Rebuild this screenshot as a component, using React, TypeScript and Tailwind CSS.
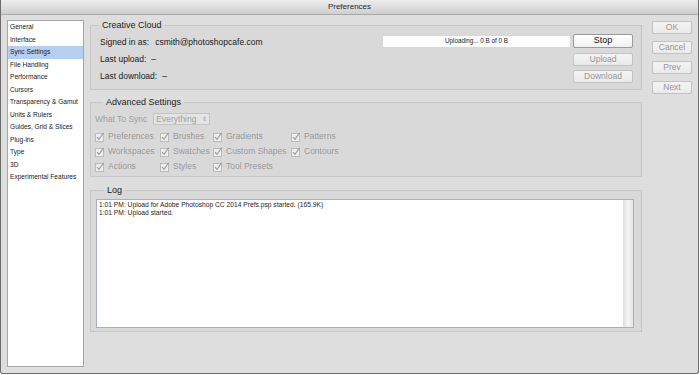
const sections = [
  "General",
  "Interface",
  "Sync Settings",
  "File Handling",
  "Performance",
  "Cursors",
  "Transparency & Gamut",
  "Units & Rulers",
  "Guides, Grid & Slices",
  "Plug-ins",
  "Type",
  "3D",
  "Experimental Features",
];

const syncRows = [
  ["Preferences", "Brushes", "Gradients", "Patterns"],
  ["Workspaces", "Swatches", "Custom Shapes", "Contours"],
  ["Actions", "Styles", "Tool Presets"],
];

const logLines = [
  "1:01 PM: Upload for Adobe Photoshop CC 2014 Prefs.psp started. (165.9K)",
  "1:01 PM: Upload started.",
];

function Check({ label }: { label: string }) {
  return (
    <div className="flex items-center gap-[3px] h-[15px]">
      <svg width="10" height="10" viewBox="0 0 10 10" className="shrink-0">
        <rect x="0.5" y="1.5" width="8" height="8" fill="#efefef" stroke="#bababa" />
        <path d="M2 5.2 L4 7.4 L8.6 0.8" fill="none" stroke="#9a9a9a" strokeWidth="1.1" />
      </svg>
      <span className="text-[8.5px] text-[#9a9a9a]">{label}</span>
    </div>
  );
}

function Btn({ label, active, className }: { label: string; active?: boolean; className?: string }) {
  return (
    <div
      className={
        "flex items-center justify-center rounded-[2px] border bg-gradient-to-b " +
        (active
          ? "border-[#9a9a9a] from-white to-[#f1f1f1] text-[#111] text-[9px] font-medium "
          : "border-[#c2c2c2] from-[#f4f4f4] to-[#eaeaea] text-[#979797] text-[8.5px] ") +
        (className ?? "")
      }
    >
      {label}
    </div>
  );
}

function Group({ title, className, children }: { title: string; className?: string; children: React.ReactNode }) {
  return (
    <fieldset className={"border border-[#c6c6c6] bg-[#d9d9d9] " + (className ?? "")}>
      <legend className="ml-[8px] px-[3px] text-[9px] leading-[11px] text-[#1c1c1c]">{title}</legend>
      {children}
    </fieldset>
  );
}

export default function App() {
  return (
    <div className="w-[700px] h-[375px] bg-white font-['Liberation_Sans',Arial,sans-serif]">
      <div className="w-[699px] h-[374px] flex flex-col border-x border-b border-[#6c6c6c] rounded-b-[3px] bg-[#dedede] overflow-hidden">
        <div className="h-[15px] shrink-0 flex items-center justify-center border-b border-[#a9a9a9] bg-gradient-to-b from-[#ececec] to-[#cfcfcf] text-[8px] text-[#2a2a2a]">
          Preferences
        </div>

        <div className="flex flex-1 pt-[5px] pl-[6px] pb-[6px]">
          <div className="w-[77px] border border-[#a6a6a6] bg-white">
            {sections.map((s) => (
              <div
                key={s}
                className={
                  "h-[12.5px] leading-[12.5px] pl-[2px] text-[6.6px] text-[#1a1a1a] whitespace-nowrap " +
                  (s === "Sync Settings" ? "bg-[#b6cff0]" : "")
                }
              >
                {s}
              </div>
            ))}
          </div>

          <div className="ml-[6px] w-[552px] flex flex-col">
            <Group title="Creative Cloud" className="pb-[4px]">
              <div className="flex">
                <div className="flex-1 pl-[9px] pt-[3px] text-[8.5px] text-[#1a1a1a]">
                  <div className="h-[17px] leading-[17px]">
                    Signed in as:<span className="ml-[6px]">csmith@photoshopcafe.com</span>
                  </div>
                  <div className="h-[17px] leading-[17px]">
                    Last upload:<span className="ml-[5px]">–</span>
                  </div>
                  <div className="h-[17px] leading-[17px]">
                    Last download:<span className="ml-[5px]">–</span>
                  </div>
                </div>
                <div className="pt-[3px] pr-[8px] flex flex-col items-end">
                  <div className="flex items-center gap-[3px]">
                    <div className="w-[187px] h-[11px] bg-white flex items-center justify-center text-[6.3px] text-[#222]">
                      Uploading... 0 B of 0 B
                    </div>
                    <Btn label="Stop" active className="w-[60px] h-[14px]" />
                  </div>
                  <Btn label="Upload" className="w-[60px] h-[13px] mt-[5px]" />
                  <Btn label="Download" className="w-[60px] h-[13px] mt-[4px]" />
                </div>
              </div>
            </Group>

            <Group title="Advanced Settings" className="mt-[7px] pl-[4px] pb-[2px]">
              <div className="mt-[5px] flex items-center h-[12px]">
                <span className="text-[8.5px] text-[#a0a0a0]">What To Sync</span>
                <div className="ml-[6px] w-[57px] h-[12px] border border-[#c3c3c3] bg-[#e4e4e4] flex items-center justify-between px-[2px] text-[8.5px] text-[#a0a0a0]">
                  <span>Everything</span>
                  <span className="text-[6px]">⇕</span>
                </div>
              </div>
              <div className="mt-[4px] grid grid-cols-[65px_53px_78px_auto]">
                {syncRows.map((row) =>
                  [0, 1, 2, 3].map((i) =>
                    row[i] ? <Check key={row[i]} label={row[i]} /> : <div key={row[0] + i} />
                  )
                )}
              </div>
            </Group>

            <Group title="Log" className="mt-[8px] pl-[5px] pr-[7px] pb-[3px]">
              <div className="mt-[3px] h-[129px] flex border border-[#a2b0c1] bg-white">
                <div className="flex-1 pl-[2px] pt-[1px] text-[6.7px] leading-[8px] text-[#1e1e1e]">
                  {logLines.map((l) => (
                    <div key={l}>{l}</div>
                  ))}
                </div>
                <div className="w-[10px] bg-gradient-to-r from-[#dedede] via-[#f5f5f5] to-[#e6e6e6]" />
              </div>
            </Group>
          </div>

          <div className="ml-[10px] pt-[1px] flex flex-col gap-[7px]">
            <Btn label="OK" className="w-[40px] h-[13px]" />
            <Btn label="Cancel" className="w-[40px] h-[13px]" />
            <Btn label="Prev" className="w-[40px] h-[13px]" />
            <Btn label="Next" className="w-[40px] h-[13px]" />
          </div>
        </div>
      </div>
    </div>
  );
}
